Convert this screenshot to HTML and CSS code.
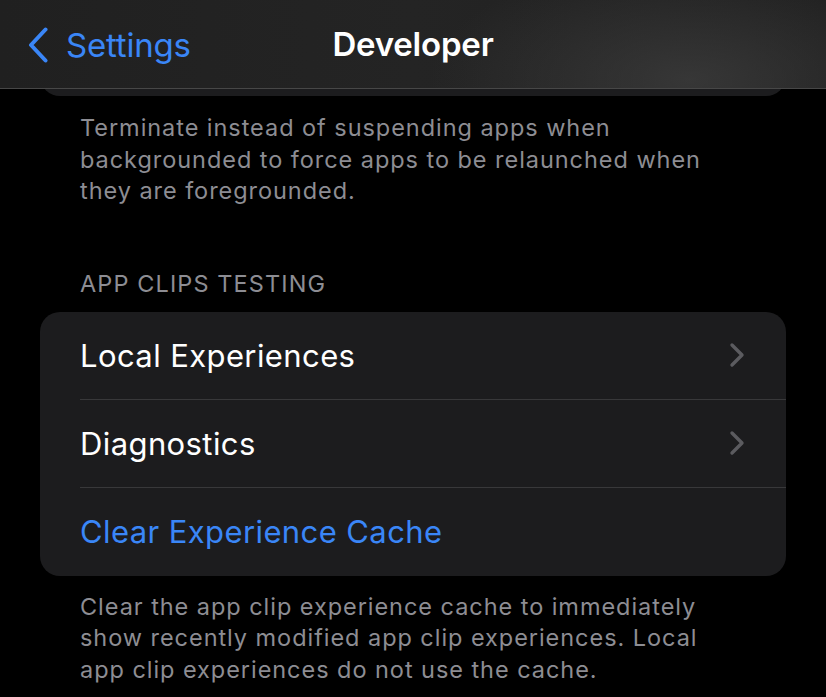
FILE: index.html
```html
<!DOCTYPE html>
<html lang="en">
<head>
<meta charset="utf-8">
<link rel="stylesheet" href="styles.css">
<title>Developer</title>
</head>
<body>
<div class="screen">
  <header class="navbar">
    <div class="back">
      <svg class="back-chevron" width="22" height="36" viewBox="0 0 22 36"><path d="M18.5 2.5 L4 18 L18.5 33.5" fill="none" stroke="#3a86f7" stroke-width="4" stroke-linecap="round" stroke-linejoin="round"/></svg>
      <span class="back-label">Settings</span>
    </div>
    <h1 class="title">Developer</h1>
  </header>
  <main class="content">
    <div class="card card-top"></div>
    <p class="footer-note footer-first">Terminate instead of suspending apps when backgrounded to force apps to be relaunched when they are foregrounded.</p>
    <h2 class="section-header">APP CLIPS TESTING</h2>
    <div class="card">
      <div class="row">
        <span class="row-label">Local Experiences</span>
        <svg class="chevron" width="16" height="26" viewBox="0 0 16 26"><path d="M3 3 L13 13 L3 23" fill="none" stroke="#5b5b5f" stroke-width="3.4" stroke-linecap="round" stroke-linejoin="round"/></svg>
      </div>
      <div class="row">
        <span class="row-label">Diagnostics</span>
        <svg class="chevron" width="16" height="26" viewBox="0 0 16 26"><path d="M3 3 L13 13 L3 23" fill="none" stroke="#5b5b5f" stroke-width="3.4" stroke-linecap="round" stroke-linejoin="round"/></svg>
      </div>
      <div class="row row-last">
        <span class="row-label row-action">Clear Experience Cache</span>
      </div>
    </div>
    <p class="footer-note footer-second">Clear the app clip experience cache to immediately show recently modified app clip experiences. Local app clip experiences do not use the cache.</p>
  </main>
</div>
</body>
</html>
```
FILE: styles.css
```css
* { box-sizing: border-box; }
html, body {
  margin: 0;
  padding: 0;
  background: #000;
}
body {
  font-family: Inter, "Noto Sans", "Liberation Sans", sans-serif;
  color: #fff;
  -webkit-font-smoothing: antialiased;
}
.screen {
  position: relative;
  width: 826px;
  height: 697px;
  overflow: hidden;
  background: #000;
}
.navbar {
  position: absolute;
  top: 0;
  left: 0;
  right: 0;
  height: 89px;
  z-index: 2;
  background:
    radial-gradient(ellipse 260px 120px at 690px 80px, rgba(62,62,62,0.75), rgba(62,62,62,0) 100%),
    linear-gradient(90deg, #202020 0%, #242424 50%, #1f1f1f 100%);
  border-bottom: 1px solid #474747;
  display: flex;
  align-items: center;
  justify-content: center;
}
.back {
  position: absolute;
  left: 27px;
  top: 26px;
  display: flex;
  align-items: center;
  gap: 17px;
}
.back-chevron { display: block; }
.back-label {
  font-size: 33px;
  color: #3a86f7;
  letter-spacing: -0.2px;
  line-height: 38px;
}
.title {
  margin: 0;
  font-size: 33px;
  font-weight: 600;
  letter-spacing: -0.2px;
  line-height: 38px;
}
.content {
  display: flex;
  flex-direction: column;
  padding: 0 40px;
}
.card {
  background: #1c1c1e;
  border-radius: 20px;
  overflow: hidden;
  margin-top: 13px;
}
.card-top {
  height: 96px;
  margin-top: 0;
  border-radius: 0 0 20px 20px;
}
.footer-note {
  margin: 0;
  padding: 0 40px;
  font-size: 23.5px;
  line-height: 31.5px;
  letter-spacing: 0.95px;
  color: #8d8d93;
}
.footer-first { margin-top: 16px; }
.footer-second { margin-top: 15px; }
.section-header {
  margin: 61px 0 0;
  padding: 0 40px;
  font-size: 23.5px;
  font-weight: 400;
  line-height: 31px;
  color: #8d8d93;
  letter-spacing: 1.1px;
}
.row {
  height: 88px;
  margin-left: 40px;
  padding-right: 41px;
  display: flex;
  align-items: center;
  justify-content: space-between;
  border-bottom: 1px solid #38383a;
}
.row-last { border-bottom: none; }
.row-label {
  font-size: 31px;
  letter-spacing: 0.4px;
}
.row-action { color: #3a86f7; }
.chevron { display: block; }
```
